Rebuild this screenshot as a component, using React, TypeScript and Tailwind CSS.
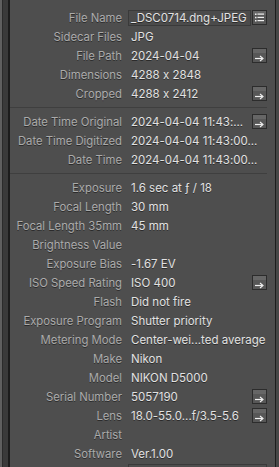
type Row = {
    label: string
    value?: string
    button?: 'arrow' | 'list'
    boxed?: boolean
}

const groups: Row[][] = [
    [
        { label: 'File Name', value: '_DSC0714.dng+JPEG', button: 'list', boxed: true },
        { label: 'Sidecar Files', value: 'JPG' },
        { label: 'File Path', value: '2024-04-04', button: 'arrow' },
        { label: 'Dimensions', value: '4288 x 2848' },
        { label: 'Cropped', value: '4288 x 2412', button: 'arrow' },
    ],
    [
        { label: 'Date Time Original', value: '2024-04-04 11:43:...', button: 'arrow' },
        { label: 'Date Time Digitized', value: '2024-04-04 11:43:00...' },
        { label: 'Date Time', value: '2024-04-04 11:43:00...' },
    ],
    [
        { label: 'Exposure', value: '1.6 sec at ƒ / 18' },
        { label: 'Focal Length', value: '30 mm' },
        { label: 'Focal Length 35mm', value: '45 mm' },
        { label: 'Brightness Value' },
        { label: 'Exposure Bias', value: '-1.67 EV' },
        { label: 'ISO Speed Rating', value: 'ISO 400', button: 'arrow' },
        { label: 'Flash', value: 'Did not fire' },
        { label: 'Exposure Program', value: 'Shutter priority' },
        { label: 'Metering Mode', value: 'Center-wei...ted average' },
        { label: 'Make', value: 'Nikon' },
        { label: 'Model', value: 'NIKON D5000' },
        { label: 'Serial Number', value: '5057190', button: 'arrow' },
        { label: 'Lens', value: '18.0-55.0...f/3.5-5.6', button: 'arrow' },
        { label: 'Artist' },
        { label: 'Software', value: 'Ver.1.00' },
    ],
]

const SmallButton = ({ kind }: { kind: 'arrow' | 'list' }) => (
    <div className="w-[15px] h-[15px] shrink-0 border border-[#2c2c2c] bg-gradient-to-b from-[#666666] from-30% to-[#575757] to-30% flex items-center justify-center">
        {kind === 'arrow' ? (
            <svg width="11" height="11" viewBox="0 0 11 11" className="mt-[3px]">
                <path d="M1 6.5H8.5" stroke="#f0f0f0" strokeWidth="1.2" />
                <path d="M6 4L9 6.5L6 9" stroke="#f0f0f0" strokeWidth="1.1" fill="none" />
            </svg>
        ) : (
            <svg width="11" height="11" viewBox="0 0 11 11">
                <rect x="1" y="1.5" width="1.5" height="1.5" fill="#eee" />
                <rect x="3.5" y="1.5" width="6.5" height="1.2" fill="#eee" />
                <rect x="1" y="4.8" width="1.5" height="1.5" fill="#eee" />
                <rect x="3.5" y="4.8" width="6.5" height="1.2" fill="#eee" />
                <rect x="1" y="8" width="1.5" height="1.5" fill="#eee" />
                <rect x="3.5" y="8" width="6.5" height="1.2" fill="#eee" />
            </svg>
        )}
    </div>
)

const MetaRow = ({ row }: { row: Row }) => (
    <div className="flex items-center h-[19px]">
        <div className="w-[112px] shrink-0 text-right text-[11.3px] leading-[16px] text-[#ababab] whitespace-nowrap">
            {row.label}
        </div>
        <div className="ml-[6px] flex-1 min-w-0 flex items-center h-full text-[11.5px] leading-[16px]">
            {row.boxed ? (
                <div className="flex-1 h-[16px] border border-[#3a3a3a] bg-[#4b4b4b] flex items-center px-[2px] mr-[1px] text-[#e2e2e2] whitespace-nowrap overflow-hidden">
                    {row.value}
                </div>
            ) : (
                <div className="flex-1 pl-[3px] text-[#e2e2e2] whitespace-nowrap">{row.value}</div>
            )}
            {row.button && <SmallButton kind={row.button} />}
        </div>
    </div>
)

const App = () => {
    return (
        <div
            className="w-[279px] h-[467px] flex overflow-hidden bg-[#4e4e4e] leading-none [text-shadow:0_1px_0_rgba(0,0,0,0.45)]"
            style={{ fontFamily: 'Inter, "Noto Sans", sans-serif', fontFeatureSettings: '"calt" 0' }}
        >
            <div className="w-[2px] bg-[#5f5f5f]"></div>
            <div className="w-[1px] bg-[#2b2b2b]"></div>
            <div className="w-[5px] bg-[#3a3a3a]"></div>
            <div className="w-[2px] bg-[#1c1c1c]"></div>
            <div className="flex-1 pt-[8px] pr-[8px] flex flex-col">
                {groups.map((group, gi) => (
                    <div key={gi}>
                        {gi > 0 && <div className="my-[4px] border-t border-[#3f3f3f]"></div>}
                        {group.map((row) => (
                            <MetaRow key={row.label} row={row} />
                        ))}
                    </div>
                ))}
                <div className="ml-[118px] mt-[1px] h-[10px] border border-[#3a3a3a] border-b-0"></div>
            </div>
            <div className="w-[1px] bg-[#1e1e1e]"></div>
            <div className="w-[3px] bg-[#474747]"></div>
        </div>
    )
}

export default App
